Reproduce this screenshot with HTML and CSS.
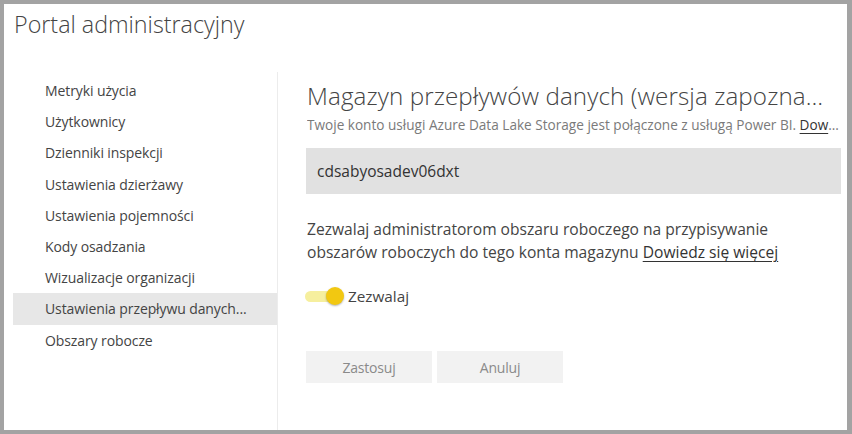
FILE: index.html
```html
<!DOCTYPE html>
<html lang="pl">
<head>
<meta charset="utf-8">
<title>Portal administracyjny</title>
<link rel="stylesheet" href="styles.css">
</head>
<body>
<div class="frame">
  <header class="header">
    <h1 class="title">Portal administracyjny</h1>
  </header>
  <div class="body">
    <nav class="sidebar">
      <ul class="nav">
        <li class="nav-item">Metryki użycia</li>
        <li class="nav-item">Użytkownicy</li>
        <li class="nav-item">Dzienniki inspekcji</li>
        <li class="nav-item">Ustawienia dzierżawy</li>
        <li class="nav-item">Ustawienia pojemności</li>
        <li class="nav-item">Kody osadzania</li>
        <li class="nav-item">Wizualizacje organizacji</li>
        <li class="nav-item active">Ustawienia przepływu danych...</li>
        <li class="nav-item">Obszary robocze</li>
      </ul>
    </nav>
    <main class="main">
      <h2 class="heading">Magazyn przepływów danych (wersja zapoznawcza)</h2>
      <p class="subtitle">Twoje konto usługi Azure Data Lake Storage jest połączone z usługą Power BI. <a class="link" href="#">Dowiedz się więcej</a></p>
      <div class="field">cdsabyosadev06dxt</div>
      <p class="desc">Zezwalaj administratorom obszaru roboczego na przypisywanie obszarów roboczych do tego konta magazynu <a class="link" href="#">Dowiedz się więcej</a></p>
      <div class="toggle-row">
        <span class="toggle"><span class="track"></span><span class="knob"></span></span>
        <span class="toggle-label">Zezwalaj</span>
      </div>
      <div class="buttons">
        <button class="btn">Zastosuj</button>
        <button class="btn">Anuluj</button>
      </div>
    </main>
  </div>
</div>
</body>
</html>
```
FILE: styles.css
```css
* { box-sizing: border-box; }
html, body { margin: 0; padding: 0; }
body {
  width: 852px;
  height: 434px;
  overflow: hidden;
  font-family: "Open Sans", "Noto Sans", sans-serif;
  color: #444;
}
.frame {
  width: 852px;
  height: 434px;
  border-style: solid;
  border-color: #a3a3a3;
  border-width: 4px 5px 4px 4px;
  background: #fff;
  display: flex;
  flex-direction: column;
}
.header {
  height: 68px;
  padding: 4px 0 0 10px;
}
.title {
  margin: 0;
  font-size: 23.3px;
  font-weight: 300;
  line-height: 32px;
  color: #444;
  letter-spacing: 0;
}
.body {
  flex: 1;
  display: flex;
  min-height: 0;
}
.sidebar {
  width: 274px;
  border-right: 1px solid #ececec;
  padding: 3px 0 0 9px;
}
.nav {
  list-style: none;
  margin: 0;
  padding: 0;
}
.nav-item {
  height: 31.2px;
  line-height: 31px;
  padding-left: 32px;
  font-size: 14px;
  color: #444;
  white-space: nowrap;
  letter-spacing: -0.1px;
}
.nav-item.active {
  background: #e7e7e7;
}
.main {
  flex: 1;
  min-width: 0;
  padding: 8px 6px 0 29px;
}
.heading {
  margin: 0 4px 0 0;
  font-size: 24.2px;
  font-weight: 300;
  line-height: 32px;
  color: #444;
  white-space: nowrap;
  overflow: hidden;
  text-overflow: ellipsis;
  letter-spacing: 0.1px;
}
.subtitle {
  margin: 4px 0 0;
  font-size: 13.6px;
  line-height: 18px;
  color: #7a7a7a;
  white-space: nowrap;
  overflow: hidden;
  text-overflow: ellipsis;
  letter-spacing: 0;
}
.link {
  color: #333;
  text-decoration: underline;
  text-underline-offset: 3px;
}
.field {
  margin: 14px 0 0 -1px;
  height: 46px;
  background: #e1e1e1;
  padding-left: 11px;
  line-height: 46px;
  font-size: 15.5px;
  color: #333;
  letter-spacing: 0;
}
.desc {
  margin: 24px 0 0;
  font-size: 15.6px;
  line-height: 23px;
  color: #444;
  max-width: 500px;
  letter-spacing: 0;
}
.toggle-row {
  margin-top: 22px;
  display: flex;
  align-items: center;
  height: 20px;
}
.toggle {
  position: relative;
  width: 40px;
  height: 20px;
  margin-left: -2px;
}
.track {
  position: absolute;
  left: 0;
  top: 5px;
  width: 32px;
  height: 11px;
  border-radius: 6px;
  background: #f6ef9e;
}
.knob {
  position: absolute;
  left: 21px;
  top: 1px;
  width: 18px;
  height: 18px;
  border-radius: 50%;
  background: #f2c811;
  box-shadow: 0 1px 2px rgba(0,0,0,0.3);
}
.toggle-label {
  margin-left: 3px;
  font-size: 15.3px;
  color: #444;
  letter-spacing: 0;
}
.buttons {
  margin: 45px 0 0 -1px;
  display: flex;
  gap: 5px;
}
.btn {
  width: 126px;
  height: 32px;
  border: 0;
  background: #f2f2f2;
  color: #8a8a8a;
  font-family: inherit;
  font-size: 14px;
  letter-spacing: -0.2px;
  padding: 0;
}
```
